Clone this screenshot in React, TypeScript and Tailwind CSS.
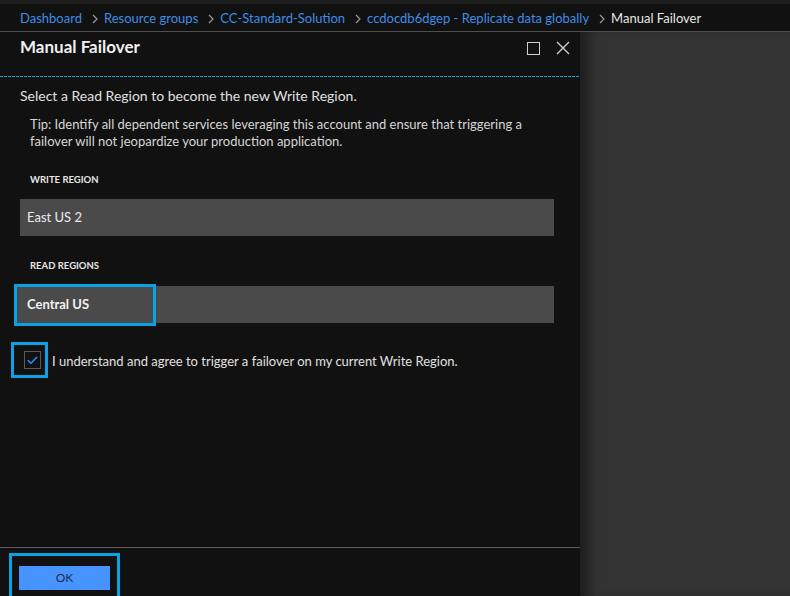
import { Check } from "lucide-react";

const crumbs = [
  "Dashboard",
  "Resource groups",
  "CC-Standard-Solution",
  "ccdocdb6dgep - Replicate data globally",
];

const Chevron = () => (
  <svg width="8" height="10" viewBox="0 0 8 10" className="shrink-0">
    <path d="M2 1 L6 5 L2 9" fill="none" stroke="#9a9a9a" strokeWidth="1.2" />
  </svg>
);

export default function App() {
  return (
    <div
      className="w-[790px] h-[596px] overflow-hidden flex flex-col bg-[#111111] text-[#dddddd]"
      style={{ fontFamily: "Lato, 'Liberation Sans', sans-serif" }}
    >
      {/* top strip */}
      <div className="h-[4px] bg-[#1e1e1e] shrink-0" />

      {/* breadcrumb */}
      <div className="h-[28px] shrink-0 flex items-center gap-[5px] pl-[20px] pt-[2px] border-b border-[#4f4f4f] text-[13px]">
        {crumbs.map((c) => (
          <div key={c} className="flex items-center gap-[9px]">
            <span className="text-[#3f8ee4]">{c}</span>
            <Chevron />
          </div>
        ))}
        <span className="text-[#e6e6e6]">Manual Failover</span>
      </div>

      <div className="flex-1 flex min-h-0">
        {/* blade */}
        <div className="w-[580px] shrink-0 flex flex-col bg-[#111111]">
          <div className="h-[44px] shrink-0 flex items-start justify-between pl-[20px] pr-[10px] pt-[2px]">
            <h1 className="text-[17px] font-bold text-[#f0f0f0]">Manual Failover</h1>
            <div className="flex items-center gap-[16px] pt-[7px]">
              <div className="w-[13px] h-[13px] border-[1.5px] border-[#d0d0d0]" />
              <svg width="14" height="14" viewBox="0 0 14 14">
                <path d="M1 1 L13 13 M13 1 L1 13" stroke="#d0d0d0" strokeWidth="1.4" />
              </svg>
            </div>
          </div>
          <div className="h-px shrink-0 bg-[repeating-linear-gradient(90deg,#16a3dc_0_3px,transparent_3px_4px)]" />

          <div className="flex-1 flex flex-col">
            <p className="mt-[9px] pl-[20px] text-[14px] leading-[20px] text-[#e0e0e0]">
              Select a Read Region to become the new Write Region.
            </p>
            <p className="mt-[10px] pl-[30px] pr-[40px] text-[13px] leading-[17px] text-[#d6d6d6]">
              Tip: Identify all dependent services leveraging this account and ensure that triggering a failover will
              not jeopardize your production application.
            </p>

            <div className="mt-[24px] pl-[30px] text-[9.5px] leading-[12px] font-bold text-[#e6e6e6]">WRITE REGION</div>
            <div className="mt-[13px] ml-[20px] w-[534px] h-[37px] bg-[#4a4a4a] flex items-center pl-[7px] text-[13px] text-[#ececec]">
              East US 2
            </div>

            <div className="mt-[24px] pl-[30px] text-[9.5px] leading-[12px] font-bold text-[#e6e6e6]">READ REGIONS</div>
            <div className="relative mt-[14px] ml-[20px] w-[534px] h-[37px] bg-[#4a4a4a]">
              <div className="absolute left-[-6px] top-[-2px] w-[142px] h-[42px] border-[3px] border-[#0aa2e4] bg-[#4a4a4a] flex items-center pl-[10px] text-[13px] font-bold text-[#f2f2f2]">
                Central US
              </div>
            </div>

            <div className="mt-[19px] flex items-center">
              <div className="ml-[11px] w-[37px] h-[36px] border-[3px] border-[#0aa2e4] flex items-center justify-end pr-[4px]">
                <div className="w-[17px] h-[18px] border border-[#5a5a5a] flex items-center justify-center">
                  <Check size={13} strokeWidth={3} color="#1e8fff" />
                </div>
              </div>
              <span className="ml-[4px] pt-[4px] text-[13px] text-[#e0e0e0]">
                I understand and agree to trigger a failover on my current Write Region.
              </span>
            </div>
          </div>

          {/* footer */}
          <div className="h-[49px] shrink-0 border-t border-[#5c5c5c] pt-[5px] pl-[9px]">
            <div className="w-[111px] border-[3px] border-[#0aa2e4] px-[7px] pt-[8px] pb-[8px]">
              <button className="w-[91px] h-[24px] bg-[#4894fe] text-[12px] text-[#1c2c4a]">OK</button>
            </div>
          </div>
        </div>

        {/* backdrop */}
        <div className="flex-1 bg-[#333333] shadow-[inset_14px_0_12px_-6px_rgba(0,0,0,0.45)]" />
      </div>
    </div>
  );
}
